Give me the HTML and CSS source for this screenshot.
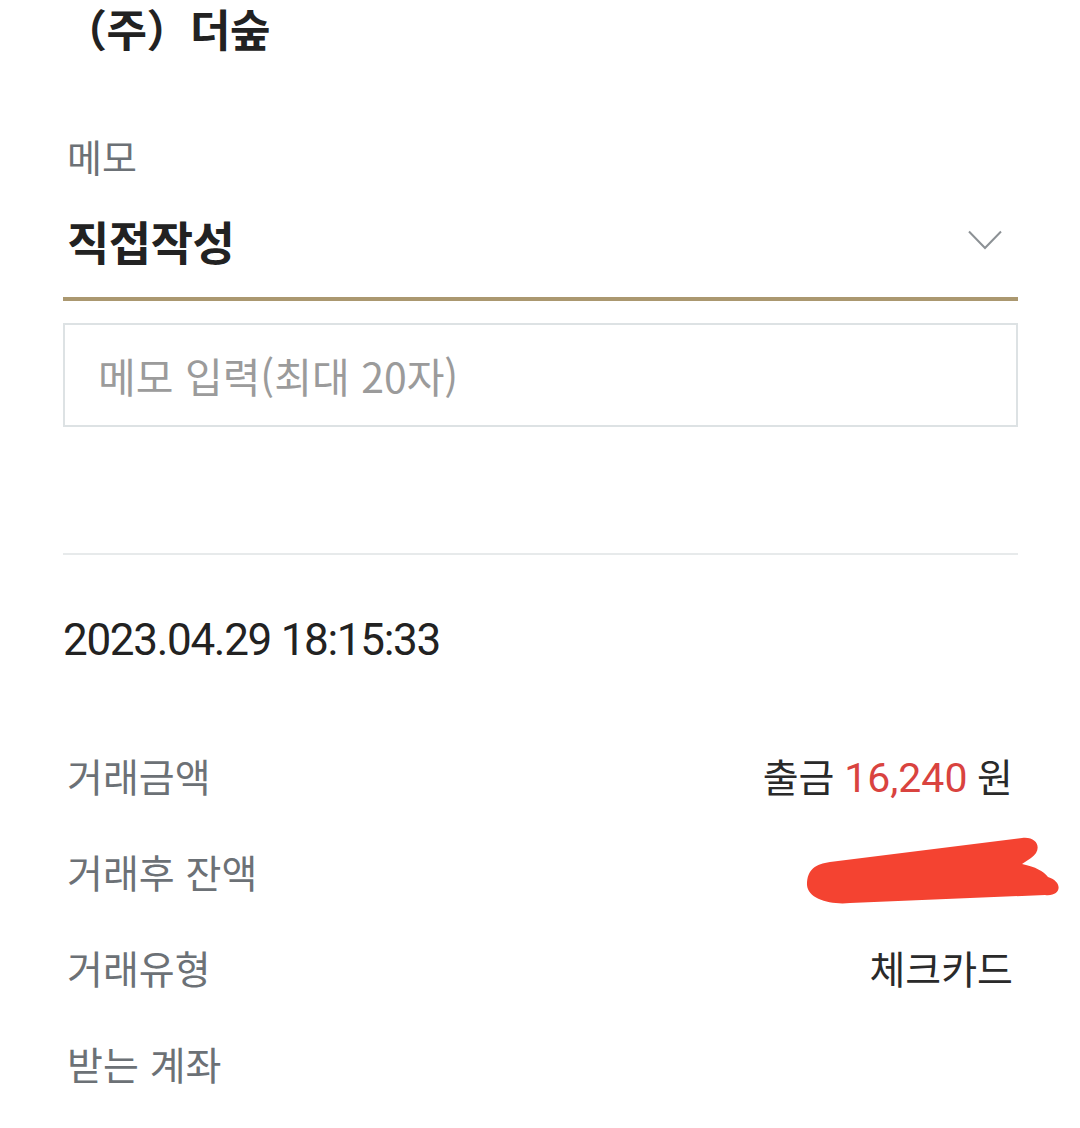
FILE: index.html
```html
<!DOCTYPE html>
<html lang="ko">
<head>
<meta charset="utf-8">
<title>거래내역 상세</title>
<link rel="stylesheet" href="styles.css">
</head>
<body>
<main class="page">
  <h1 class="title">（주）더숲</h1>

  <section class="memo">
    <div class="memo-label">메모</div>
    <div class="select">
      <span class="select-value">직접작성</span>
      <svg class="chevron" width="34" height="20" viewBox="0 0 34 20">
        <polyline points="1,1.5 17,18 33,1.5" fill="none" stroke="#8c9195" stroke-width="2"/>
      </svg>
    </div>
    <div class="memo-input">메모 입력(최대 20자)</div>
  </section>

  <hr class="divider">

  <div class="date">2023.04.29 18:15:33</div>

  <dl class="details">
    <div class="row">
      <dt>거래금액</dt>
      <dd>출금 <span class="amount">16,240</span> 원</dd>
    </div>
    <div class="row">
      <dt>거래후 잔액</dt>
      <dd>원</dd>
      <svg class="scribble" width="263" height="96" viewBox="0 0 263 96">
        <path d="M7,62 C7,46 16,41 30,39 L222,15 C238,13 243,27 231,35 L222,41 C236,44 243,48 248,54 C264,59 261,74 245,72 L50,80 C30,82 8,76 7,62 Z" fill="#f44331"/>
      </svg>
    </div>
    <div class="row">
      <dt>거래유형</dt>
      <dd>체크카드</dd>
    </div>
    <div class="row">
      <dt>받는 계좌</dt>
      <dd></dd>
    </div>
  </dl>
</main>
</body>
</html>
```

FILE: styles.css
```css
html, body {
  margin: 0;
  padding: 0;
  background: #ffffff;
}

body {
  font-family: Roboto, "Noto Sans CJK KR", sans-serif;
  color: #222222;
  overflow: hidden;
}

.page {
  padding: 0 62px 0 63px;
}

.title {
  margin: 0;
  height: 56px;
  line-height: 56px;
  font-size: 44px;
  font-weight: 700;
  color: #222222;
  font-family: "Noto Sans CJK KR", sans-serif;
  letter-spacing: -0.5px;
  white-space: nowrap;
}

.memo-label {
  margin-top: 75px;
  height: 50px;
  line-height: 50px;
  font-size: 38px;
  color: #6c7176;
  padding-left: 4px;
  font-family: "Noto Sans CJK KR", sans-serif;
}

.select {
  display: flex;
  align-items: center;
  justify-content: space-between;
  padding: 34px 16px 32px 4px;
  border-bottom: 4px solid #ab9870;
}

.select-value {
  height: 50px;
  line-height: 50px;
  font-size: 46px;
  font-weight: 700;
  color: #222222;
  font-family: "Noto Sans CJK KR", sans-serif;
  letter-spacing: -0.5px;
}

.chevron {
  display: block;
}

.memo-input {
  margin-top: 22px;
  height: 100px;
  border: 2px solid #dde2e4;
  box-sizing: content-box;
  padding-left: 33px;
  display: flex;
  align-items: center;
  font-size: 41px;
  color: #9b9b9b;
  font-family: "Noto Sans CJK KR", sans-serif;
}

.divider {
  margin: 126px 0 0 0;
  border: 0;
  height: 2px;
  background: #e7eaeb;
}

.date {
  margin-top: 60px;
  height: 50px;
  line-height: 50px;
  font-size: 44px;
  letter-spacing: -1.3px;
  color: #222222;
}

.details {
  margin: 62px 0 0 0;
}

.row {
  position: relative;
  display: flex;
  align-items: center;
  justify-content: space-between;
  height: 96px;
}

.row dt {
  padding-left: 4px;
  font-size: 39px;
  color: #6c7176;
  font-family: "Noto Sans CJK KR", sans-serif;
}

.row dd {
  margin: 0;
  padding-right: 5px;
  font-size: 39px;
  color: #2a2a2a;
  font-family: Roboto, "Noto Sans CJK KR", sans-serif;
  white-space: nowrap;
}

.amount {
  font-size: 41px;
  color: #d9433f;
}

.scribble {
  position: absolute;
  right: -45px;
  top: 0;
}
```
